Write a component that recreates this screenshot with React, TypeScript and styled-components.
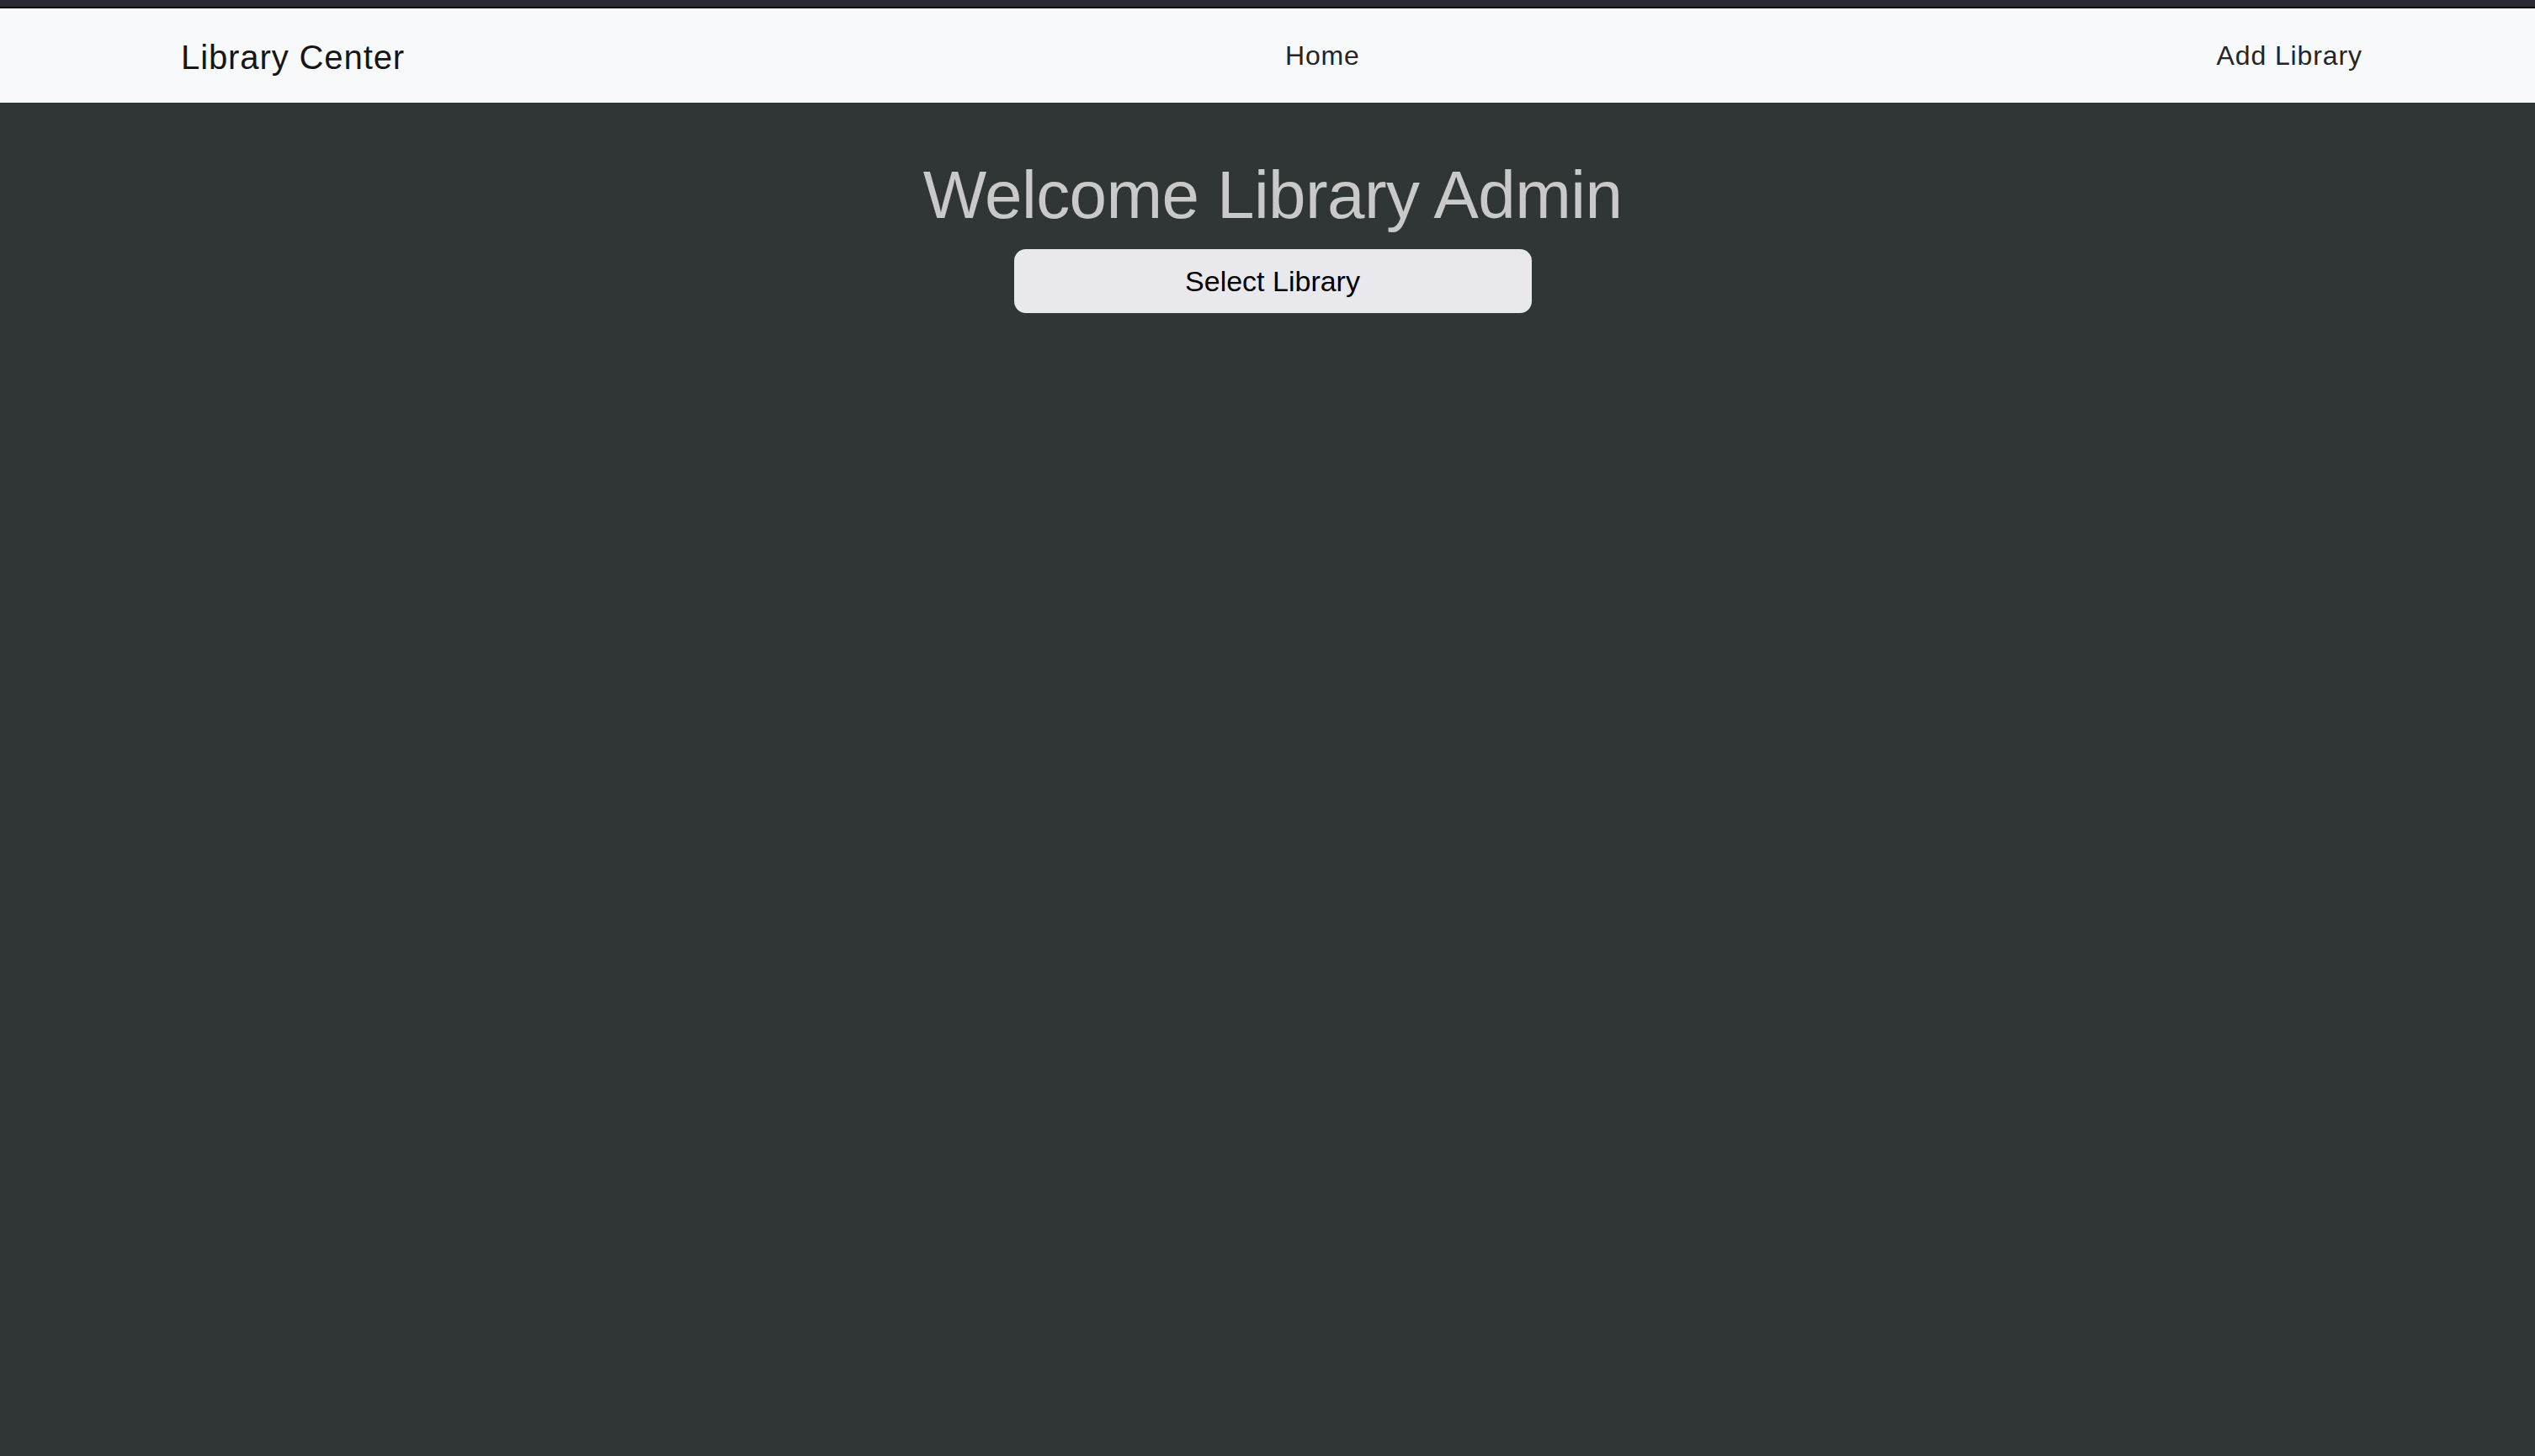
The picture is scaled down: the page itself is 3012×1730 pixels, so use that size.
import React from "react";
import styled, { createGlobalStyle } from "styled-components";

const GlobalStyle = createGlobalStyle`
  html, body {
    margin: 0;
    padding: 0;
    background: #303536;
    font-family: "Liberation Sans", Arial, sans-serif;
  }
  #root {
    min-height: 100vh;
  }
`;

const Page = styled.div`
  min-height: 100vh;
  display: flex;
  flex-direction: column;
  background: #303536;
`;

const TopStrip = styled.div`
  height: 8px;
  background: #2b2a33;
  border-bottom: 2px solid #0c0c0d;
`;

const NavBar = styled.nav`
  box-sizing: border-box;
  height: 112px;
  background: #f8f9fa;
  display: grid;
  grid-template-columns: 1312px auto 1fr auto;
  align-items: start;
  padding: 35px 205px 0 215px;
`;

const Brand = styled.a`
  font-size: 40px;
  line-height: 46px;
  letter-spacing: 0.9px;
  color: #161616;
  text-decoration: none;
  white-space: nowrap;
`;

const NavLink = styled.a<{ $end?: boolean }>`
  grid-column: ${(p) => (p.$end ? 4 : 2)};
  margin-top: 3px;
  font-size: 32px;
  line-height: 37px;
  color: #252525;
  text-decoration: none;
  white-space: nowrap;
  letter-spacing: ${(p) => (p.$end ? "0.9px" : "0.8px")};
`;

const Main = styled.main`
  display: flex;
  flex-direction: column;
  align-items: center;
  padding: 62px 0 0 12px;
`;

const Heading = styled.h1`
  margin: 0;
  font-size: 80px;
  line-height: 96px;
  font-weight: 400;
  letter-spacing: -0.6px;
  color: #c9c9c9;
`;

const SelectButton = styled.button`
  margin-top: 16px;
  width: 615px;
  height: 76px;
  border: none;
  border-radius: 14px;
  background: #e9e9ed;
  color: #000;
  font-family: "Liberation Sans", Arial, sans-serif;
  font-size: 34px;
  cursor: pointer;
`;

export default function App() {
  return (
    <>
      <GlobalStyle />
      <Page>
        <TopStrip />
        <NavBar>
          <Brand href="#">Library Center</Brand>
          <NavLink href="#">Home</NavLink>
          <NavLink href="#" $end>
            Add Library
          </NavLink>
        </NavBar>
        <Main>
          <Heading>Welcome Library Admin</Heading>
          <SelectButton>Select Library</SelectButton>
        </Main>
      </Page>
    </>
  );
}
